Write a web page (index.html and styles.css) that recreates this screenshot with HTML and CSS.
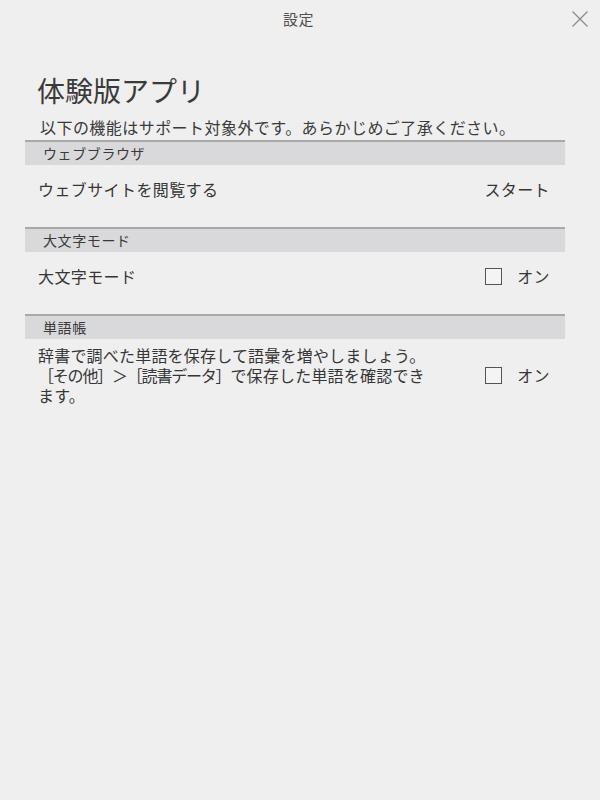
FILE: index.html
```html
<!DOCTYPE html>
<html lang="ja">
<head>
<meta charset="utf-8">
<title>設定</title>
<link rel="stylesheet" href="styles.css">
</head>
<body>
<div class="topbar">
  <span></span>
  <span class="title">設定</span>
  <svg class="close" width="18" height="18" viewBox="0 0 18 18"><path d="M1.5 1.5L16.5 16.5M16.5 1.5L1.5 16.5" stroke="#8a8a8a" stroke-width="1.3" fill="none"/></svg>
</div>
<h1 class="heading">体験版アプリ</h1>
<p class="lead">以下の機能はサポート対象外です。あらかじめご了承ください。</p>
<div class="list">
  <div class="section">ウェブブラウザ</div>
  <div class="row">
    <span class="label">ウェブサイトを閲覧する</span>
    <span class="action">スタート</span>
  </div>
  <div class="section">大文字モード</div>
  <div class="row">
    <span class="label">大文字モード</span>
    <span class="control"><span class="box"></span><span>オン</span></span>
  </div>
  <div class="section">単語帳</div>
  <div class="row row-multi">
    <span class="label label-wrap">辞書で調べた単語を保存して語彙を増やしましょう。<br><span class="tight">［その他］＞［読書データ］</span>で保存した単語を確認でき<br>ます。</span>
    <span class="control"><span class="box"></span><span>オン</span></span>
  </div>
</div>
</body>
</html>
```
FILE: styles.css
```css
html, body {
  margin: 0;
  padding: 0;
  background: #efefef;
}
body {
  width: 600px;
  height: 800px;
  font-family: "Noto Sans CJK JP", "Noto Sans", sans-serif;
  color: #363636;
}
.topbar {
  height: 38px;
  display: grid;
  grid-template-columns: 1fr auto 1fr;
  align-items: center;
  padding: 0 11px 0 8px;
}
.title {
  font-size: 15px;
  line-height: 20px;
  color: #505050;
  letter-spacing: 0.4px;
}
.close {
  justify-self: end;
}
.heading {
  margin: 34px 0 0 0;
  padding-left: 37px;
  font-size: 28px;
  line-height: 36px;
  font-weight: 400;
  color: #3a3a3a;
}
.lead {
  margin: 9px 0 0 0;
  padding-left: 40px;
  font-size: 16px;
  line-height: 20px;
  letter-spacing: 0.45px;
  color: #3a3a3a;
}
.list {
  margin: 3px 35px 0 25px;
}
.section {
  height: 23px;
  border-top: 2px solid #a9a9aa;
  background: #d9d9db;
  padding-left: 18px;
  font-size: 14px;
  line-height: 23px;
  letter-spacing: 0.6px;
  color: #3a3a3a;
}
.row {
  display: flex;
  align-items: center;
  justify-content: space-between;
  padding: 14px 15px 28px 13px;
  font-size: 16px;
  line-height: 20px;
  letter-spacing: 0.4px;
}
.row-multi {
  padding-top: 6px;
  padding-bottom: 0;
}
.label-wrap {
  white-space: nowrap;
  line-height: 20px;
  letter-spacing: 0.2px;
}
.tight {
  letter-spacing: -1.2px;
}
.control {
  display: flex;
  align-items: center;
  gap: 15px;
}
.box {
  width: 15px;
  height: 15px;
  border: 1.5px solid #555;
  background: #f4f4f4;
}
```
